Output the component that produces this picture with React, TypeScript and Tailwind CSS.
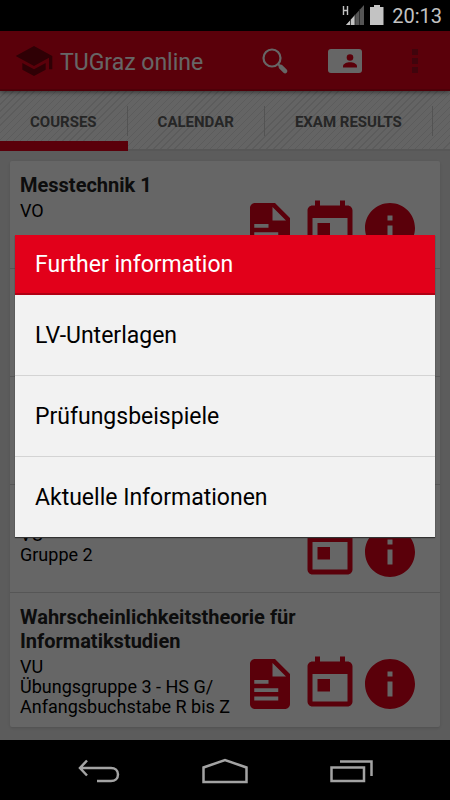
import type { ReactNode } from "react";

type Course = {
  title?: string;
  lines: string[];
  files: boolean;
};

const TABS = ["COURSES", "CALENDAR", "EXAM RESULTS"];

const COURSES: Course[] = [
  { title: "Messtechnik 1", lines: ["VO"], files: true },
  { lines: [], files: true },
  { lines: [], files: true },
  { lines: ["VO", "Gruppe 2"], files: false },
  {
    title: "Wahrscheinlichkeitstheorie für Informatikstudien",
    lines: ["VU", "Übungsgruppe 3 - HS G/", "Anfangsbuchstabe R bis Z"],
    files: true,
  },
];

const LINKS = ["LV-Unterlagen", "Prüfungsbeispiele", "Aktuelle Informationen"];

function StatusBar() {
  return (
    <div className="flex h-[31px] items-center justify-end bg-black pr-2 text-[#c3c3c3]">
      <svg width="22" height="22" viewBox="0 0 22 22" className="mr-1.5">
        <path d="M1.500 1v9M5.500 1v9M1.500 5.500h4" stroke="currentColor" strokeWidth="1.400" fill="none" />
        <path d="M22 0v20H4z" fill="#555" />
        <path d="M13 10v10H4z" fill="currentColor" />
        <path d="M8.500 14v6M13 9v11M17.500 4v16" stroke="#222" strokeWidth="0.800" />
      </svg>
      <svg width="14" height="22" viewBox="0 0 14 22" className="mr-2">
        <path d="M4 0h6v2h3.500v18H0V2h4z" fill="currentColor" />
      </svg>
      <span className="text-xl leading-6">20:13</span>
    </div>
  );
}

function ActionBar() {
  return (
    <header className="relative flex h-[60px] items-center bg-[#e2001a] pl-3.5 text-white shadow-[inset_0_-2px_0_#c00016,0_1px_5px_rgba(0,0,0,0.5)]">
      <svg width="40" height="40" viewBox="0 0 24 24" fill="#75000e">
        <path d="M5 13.180v4L12 21l7-3.820v-4L12 17l-7-3.820zM12 3L1 9l11 6 9-4.910V17h2V9L12 3z" />
      </svg>
      <h1 className="ml-1.5 flex-1 pt-1 text-[23px] leading-8">TUGraz online</h1>
      <button type="button" aria-label="Search" className="flex w-[70px] justify-center">
        <svg width="28" height="28" viewBox="0 0 28 28" fill="none" stroke="currentColor">
          <circle cx="11" cy="11" r="8.500" strokeWidth="2.200" />
          <path d="M17 17l3 3" strokeWidth="2" />
          <path d="M19.800 19.800l4.300 4.300" strokeWidth="4.500" strokeLinecap="round" />
        </svg>
      </button>
      <button type="button" aria-label="Business card" className="flex w-[70px] justify-center">
        <svg width="34" height="24" viewBox="0 0 34 24">
          <rect width="34" height="24" rx="3" fill="currentColor" />
          <circle cx="22" cy="8.500" r="3.300" fill="#e2001a" />
          <path d="M15 18.500v-1.300c0-2.500 3.800-4 7-4s7 1.500 7 4v1.300z" fill="#e2001a" />
        </svg>
      </button>
      <button type="button" aria-label="More options" className="flex w-[70px] justify-center">
        <svg width="6" height="24" viewBox="0 0 6 24" fill="#a00a20">
          <path d="M0 0h6v6H0zM0 9h6v6H0zM0 18h6v6H0z" />
        </svg>
      </button>
    </header>
  );
}

function Tabs() {
  return (
    <nav className="flex h-[60px] overflow-hidden bg-[repeating-linear-gradient(135deg,#fbfbfb_0px,#fbfbfb_4px,#e6e6e6_4px,#e6e6e6_5px)] shadow-[inset_0_-2px_0_#dadada]">
      {TABS.map((tab, i) => (
        <div key={tab} className="relative flex shrink-0 items-center">
          <button type="button" className="px-[30px] pt-0.5 text-[15px] leading-5 font-bold text-[#606060]">
            {tab}
          </button>
          <div className="h-[30px] w-px bg-[#cfcfcf]" />
          {i === 0 && <div className="absolute inset-x-0 bottom-0 h-2.5 bg-[#e2001a]" />}
        </div>
      ))}
    </nav>
  );
}

function IconButton({ label, children }: { label: string; children: ReactNode }) {
  return (
    <button type="button" aria-label={label}>
      <svg width="60" height="60" viewBox="0 0 24 24" fill="#e2001a" fillRule="evenodd">
        {children}
      </svg>
    </button>
  );
}

function CourseRow({ course }: { course: Course }) {
  return (
    <li className="border-b border-[#d8d8d8] px-2.5 pt-3 pb-2.5 last:border-b-0">
      <h2 className="min-h-6 max-w-80 text-xl leading-6 font-bold text-[#222]">{course.title}</h2>
      <div className="mt-px flex items-start justify-between pr-2.5">
        <div className="pt-[3px] text-lg leading-5 whitespace-nowrap text-black">
          {course.lines.map((line) => (
            <p key={line}>{line}</p>
          ))}
        </div>
        <div className="flex">
          {course.files && (
            <IconButton label="Files">
              <path d="M14 2H6c-1.100 0-2 .9-2 2v16c0 1.100.9 2 2 2h12c1.100 0 2-.9 2-2V8zM13 3.600L18.400 9H13zM5.700 10.400h5.700v1.500H5.700zM5.700 13.700h9.600v1.500H5.700zM5.700 17h9.600v1.600H5.700z" />
            </IconButton>
          )}
          <IconButton label="Dates">
            <path d="M19 3h-1V1h-2v2H8V1H6v2H5c-1.110 0-1.990.9-1.990 2L3 19c0 1.100.89 2 2 2h14c1.100 0 2-.9 2-2V5c0-1.100-.9-2-2-2zm0 16H5V8h14v11zM7 10h5v5H7z" />
          </IconButton>
          <IconButton label="Further information">
            <path d="M12 2C6.480 2 2 6.480 2 12s4.480 10 10 10 10-4.480 10-10S17.520 2 12 2zm1 15h-2v-6h2v6zm0-8h-2V7h2v2z" />
          </IconButton>
        </div>
      </div>
    </li>
  );
}

function InfoDialog() {
  return (
    <div className="absolute inset-0 flex items-center justify-center bg-black/60 px-[15px]">
      <div role="dialog" aria-label="Further information" className="w-full bg-[#f2f2f2] text-black shadow-[0_1px_1px_#333]">
        <div className="flex h-[60px] items-center bg-[#e2001a] px-5 shadow-[inset_0_-2px_0_#b00014]">
          <h2 className="text-[23px] leading-7 text-white">Further information</h2>
        </div>
        <ul className="divide-y divide-[#d4d4d4]">
          {LINKS.map((link) => (
            <li key={link}>
              <a href="#" className="flex h-20 items-center px-5 pt-0.5 text-[23px] leading-7">
                {link}
              </a>
            </li>
          ))}
        </ul>
      </div>
    </div>
  );
}

function NavBar() {
  return (
    <footer className="grid h-[60px] grid-cols-3 items-center bg-black px-9 pt-0.5 text-[#a3a3a3]">
      <button type="button" aria-label="Back" className="flex justify-center">
        <svg width="42" height="24" viewBox="0 0 42 24" fill="none" stroke="currentColor" strokeWidth="2.500">
          <path d="M9 1.500L2 9l7 7.500M2.500 9H33c4 0 7 2.500 7 6.500S37 22 33 22H19" />
        </svg>
      </button>
      <button type="button" aria-label="Home" className="flex justify-center">
        <svg width="46" height="26" viewBox="0 0 46 26" fill="none" stroke="currentColor" strokeWidth="2.500">
          <path d="M1.500 24V9.500L23 2l21.500 7.500V24z" />
        </svg>
      </button>
      <button type="button" aria-label="Recent apps" className="flex justify-center">
        <svg width="43" height="24" viewBox="0 0 43 24" fill="none" stroke="currentColor" strokeWidth="2.500">
          <path d="M1.500 8.500h32.500V22H1.500zM10 2.500h31.500V17" />
        </svg>
      </button>
    </footer>
  );
}

export default function App() {
  return (
    <div className="flex min-h-screen flex-col bg-black font-[Roboto,sans-serif]">
      <StatusBar />
      <div className="relative flex flex-1 flex-col bg-[#e5e5e5]">
        <ActionBar />
        <Tabs />
        <main className="flex-1 px-2.5 pt-2.5 pb-3">
          <ul className="rounded-xs bg-white shadow-sm">
            {COURSES.map((course, i) => (
              <CourseRow key={i} course={course} />
            ))}
          </ul>
        </main>
        <InfoDialog />
      </div>
      <NavBar />
    </div>
  );
}
